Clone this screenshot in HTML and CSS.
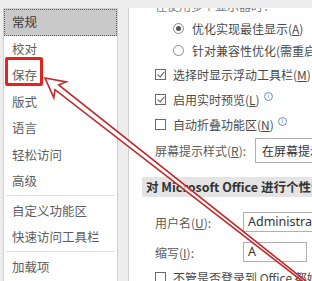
FILE: index.html
```html
<!DOCTYPE html>
<html lang="zh-CN">
<head>
  <meta charset="UTF-8" />
  <title>Word 选项</title>
  <link rel="stylesheet" href="styles.css">
</head>
<body>

  <div class="window">

    <!-- Left menu -->
    <nav class="menu">
      <div class="item active">常规</div>
      <div class="item">校对</div>
      <div class="item">保存</div>
      <div class="item">版式</div>
      <div class="item">语言</div>
      <div class="item">轻松访问</div>
      <div class="item">高级</div>
      <div class="sep"></div>
      <div class="item">自定义功能区</div>
      <div class="item">快速访问工具栏</div>
      <div class="sep"></div>
      <div class="item">加载项</div>
    </nav>

    <!-- Options pane -->
    <main class="pane">
      <div class="cut">在使用多个显示器时：</div>

      <div class="radio-row">
        <span class="radio on"></span>
        <span>优化实现最佳显示(<u>A</u>)</span>
      </div>
      <div class="radio-row">
        <span class="radio"></span>
        <span>针对兼容性优化(需重启应用程序)(<u>C</u>)</span>
      </div>

      <div class="check-row first">
        <span class="box checked"></span>
        <span>选择时显示浮动工具栏(<u>M</u>)</span>
      </div>
      <div class="check-row">
        <span class="box checked"></span>
        <span>启用实时预览(<u>L</u>)</span>
        <span class="info">i</span>
      </div>
      <div class="check-row">
        <span class="box"></span>
        <span>自动折叠功能区(<u>N</u>)</span>
        <span class="info">i</span>
      </div>

      <div class="field-row tips">
        <span class="label wide">屏幕提示样式(<u>R</u>):</span>
        <span class="select">在屏幕提示中显示功能说明</span>
      </div>

      <div class="section">对 Microsoft Office 进行个性化设置</div>

      <div class="field-row user">
        <span class="label">用户名(<u>U</u>):</span>
        <span class="input long">Administrator</span>
      </div>
      <div class="field-row abbr">
        <span class="label">缩写(<u>I</u>):</span>
        <span class="input short">A</span>
      </div>

      <div class="check-row last">
        <span class="box"></span>
        <span>不管是否登录到 Office 都始终使用这些值(<u>A</u>)</span>
      </div>
    </main>

  </div>

  <!-- Annotation: red box + arrow -->
  <div class="mark"></div>
  <svg class="arrow" width="312" height="281" viewBox="0 0 312 281">
    <polygon points="45,78 66.1,81.9 58.7,84.9 313.2,287 312,288.6 55,89.6 53.8,97.6"
             fill="rgba(255,255,255,0.7)" stroke="#c3282b" stroke-width="1.6" stroke-linejoin="miter" />
  </svg>

</body>
</html>
```

FILE: styles.css
```css
* {
  margin: 0; padding: 0; box-sizing: border-box;
}
body {
  width: 312px;
  height: 281px;
  overflow: hidden;
  background: #ededed;
  font-family: "Noto Sans CJK SC", "Noto Sans", sans-serif;
  font-size: 12px;
  color: #4a4a4a;
  position: relative;
}
.window {
  display: flex;
  gap: 10px;
  padding: 8px 0 0 3px;
  height: 281px;
}

/* Left menu */
.menu {
  width: 115px;
  flex: none;
  background: #fff;
  border: 1px solid #cfcfcf;
  border-bottom: none;
}
.item {
  height: 26.5px;
  line-height: 26.5px;
  padding-left: 8px;
  color: #5e5e5e;
  font-size: 12.5px;
}
.item.active {
  background: #c9c9c9;
  border: 1px dotted #5a5a5a;
  line-height: 24.5px;
  padding-left: 7px;
  color: #3a3a3a;
}
.sep {
  height: 1px;
  background: #e2e2e2;
  margin: 0 2px 2px 2px;
}

/* Right pane */
.pane {
  flex: 1;
  background: #fff;
  border-left: 1px solid #cfcfcf;
  overflow: hidden;
  white-space: nowrap;
}
.cut {
  margin-top: -8px;
  height: 17px;
  line-height: 12px;
  padding-left: 26px;
  color: #777;
}
.radio-row {
  height: 22px;
  display: flex;
  align-items: center;
  gap: 8px;
  padding-left: 44px;
}
.radio {
  width: 11px;
  height: 11px;
  border: 1px solid #8a8a8a;
  border-radius: 50%;
  flex: none;
  display: flex;
  align-items: center;
  justify-content: center;
}
.radio.on::after {
  content: "";
  width: 5px;
  height: 5px;
  border-radius: 50%;
  background: #555;
}
.check-row {
  height: 25px;
  display: flex;
  align-items: center;
  gap: 7px;
  padding-left: 26px;
}
.check-row.first {
  margin-top: 1px;
}
.check-row.last {
  margin-top: 5px;
  height: 20px;
}
.box {
  width: 11px;
  height: 11px;
  border: 1px solid #6a6a6a;
  background: #fff;
  flex: none;
  position: relative;
}
.box.checked::after {
  content: "";
  position: absolute;
  left: 3px;
  top: 0px;
  width: 3px;
  height: 6px;
  border-right: 1.3px solid #555;
  border-bottom: 1.3px solid #555;
  transform: rotate(40deg);
}
.info {
  width: 9px;
  height: 9px;
  border: 1px solid #6f8db3;
  border-radius: 50%;
  color: #6f8db3;
  font-family: "DejaVu Sans", sans-serif;
  font-size: 7px;
  line-height: 7px;
  text-align: center;
  margin-left: -3px;
  margin-top: -6px;
}
.field-row {
  display: flex;
  align-items: center;
  padding-left: 26px;
  height: 20px;
}
.field-row.tips {
  margin-top: 1px;
  height: 25px;
}
.field-row.user {
  margin-top: 15px;
}
.field-row.abbr {
  margin-top: 10px;
}
.label {
  width: 88px;
  flex: none;
  color: #5a5a5a;
}
.label.wide {
  width: 100px;
}
.select {
  height: 25px;
  line-height: 23px;
  border: 1px solid #b0b0b0;
  padding-left: 6px;
  width: 120px;
  flex: none;
  color: #333;
}
.input {
  height: 20px;
  line-height: 18px;
  border: 1px solid #b0b0b0;
  padding-left: 4px;
  flex: none;
  color: #333;
  font-family: "Noto Sans", sans-serif;
  font-size: 12.5px;
}
.input.long {
  width: 120px;
}
.input.short {
  width: 64px;
}
.section {
  margin: 14px 0 0 13px;
  height: 20px;
  line-height: 20px;
  background: #e4e4e4;
  padding-left: 4px;
  font-weight: bold;
  font-size: 12.5px;
  color: #333;
}

/* Annotation overlay */
.mark {
  position: absolute;
  left: 5px;
  top: 57px;
  width: 38px;
  height: 29px;
  border: 3px solid #e5231d;
  border-radius: 2px;
}
.arrow {
  position: absolute;
  left: 0;
  top: 0;
}
```
